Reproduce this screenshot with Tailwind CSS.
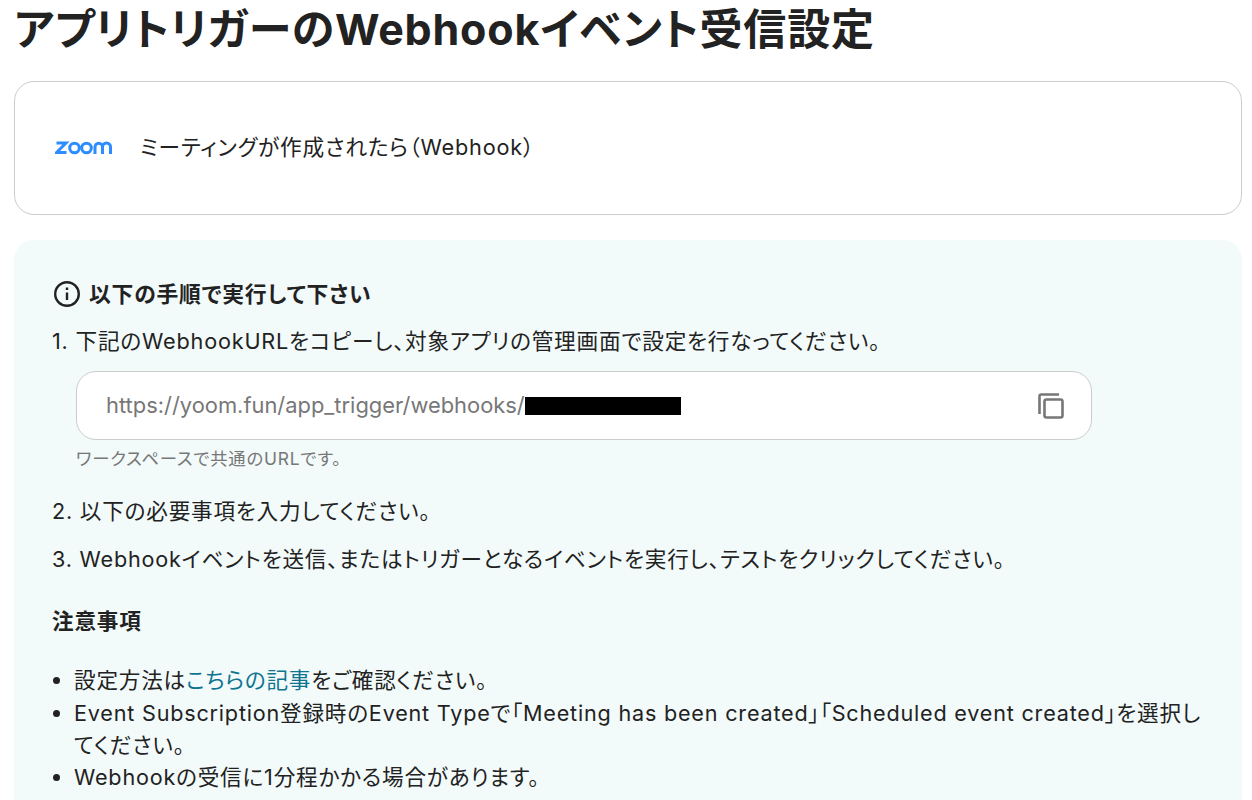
<!DOCTYPE html>
<html lang="ja">
<head>
<meta charset="UTF-8">
<title>Webhook</title>
<script src="https://cdn.jsdelivr.net/npm/@tailwindcss/browser@4"></script>
</head>
<body class="bg-white h-[800px] overflow-hidden font-['Inter','Noto_Sans_CJK_JP',sans-serif] text-[#222] tracking-[0.05em] [font-feature-settings:'palt']">
<div class="pl-[14px] pr-[10px]">
  <h1 class="text-[43px] leading-[58px] font-bold mb-[23px]">アプリトリガーのWebhookイベント受信設定</h1>

  <section class="h-[134px] border border-[#ccc] rounded-[20px] flex items-center pl-[40px] pb-[2px] gap-[27px]">
    <svg width="58" height="15" viewBox="0 0 58 15"><g fill="none" stroke="#2d8cff" stroke-width="3"><path d="M1.500 3h9.500L1.500 12.500h10"/><circle cx="19.500" cy="8" r="4.800"/><circle cx="31.500" cy="8" r="4.800"/><path d="M40 14V7a3.200 3.200 0 0 1 7.500 0V14M47.500 7a3.200 3.200 0 0 1 8 0V14"/></g></svg>
    <span class="text-[21.7px]">ミーティングが作成されたら（Webhook）</span>
  </section>

  <section class="mt-[25px] bg-[#f2fafa] rounded-t-[20px] h-[560px] px-[38px] pt-[38px]">
    <div class="flex items-center gap-[8px] text-[21.8px] font-bold leading-[32px]">
      <svg class="ml-[1px]" width="28" height="28" viewBox="0 0 28 28" fill="none" stroke="#222" stroke-width="2.400"><circle cx="14" cy="14" r="11.800"/><path d="M14 12.500v7.500M14 7.500v2.400"/></svg>
      以下の手順で実行して下さい
    </div>
    <p class="text-[21.65px] leading-[32.4px] mt-[15px]">1. 下記のWebhookURLをコピーし、対象アプリの管理画面で設定を行なってください。</p>
    <div class="ml-[24px] mt-[14px] w-[1016px] h-[69px] bg-white border border-[#ccc] rounded-[20px] flex items-center justify-between pl-[29px] pr-[27px]">
      <div class="flex items-center text-[21.9px] tracking-normal text-[#777]">https://yoom.fun/app_trigger/webhooks/<span class="w-[156px] h-[18px] bg-black"></span></div>
      <svg width="26" height="26" viewBox="0 0 26 26" fill="none" stroke="#777" stroke-width="2.600"><path d="M1.500 21V3a1.500 1.500 0 0 1 1.500-1.500H21"/><rect x="6.500" y="6.500" width="18" height="18" rx="2"/></svg>
    </div>
    <p class="ml-[24px] mt-[7px] text-[17.4px] leading-[24px] text-[#777]">ワークスペースで共通のURLです。</p>
    <p class="text-[21.6px] leading-[32.4px] mt-[24px]">2. 以下の必要事項を入力してください。</p>
    <p class="text-[21.6px] leading-[32.4px] mt-[15px]">3. Webhookイベントを送信、またはトリガーとなるイベントを実行し、テストをクリックしてください。</p>
    <p class="text-[21.6px] leading-[32.4px] font-bold mt-[30px]">注意事項</p>
    <ul class="list-disc pl-[22px] mt-[26.500px] text-[21.6px] leading-[32.4px]">
      <li>設定方法は<a class="text-[#0e7490]">こちらの記事</a>をご確認ください。</li>
      <li>Event Subscription登録時のEvent Typeで「Meeting has been created」「Scheduled event created」を選択してください。</li>
      <li>Webhookの受信に1分程かかる場合があります。</li>
    </ul>
  </section>
</div>
</body>
</html>
